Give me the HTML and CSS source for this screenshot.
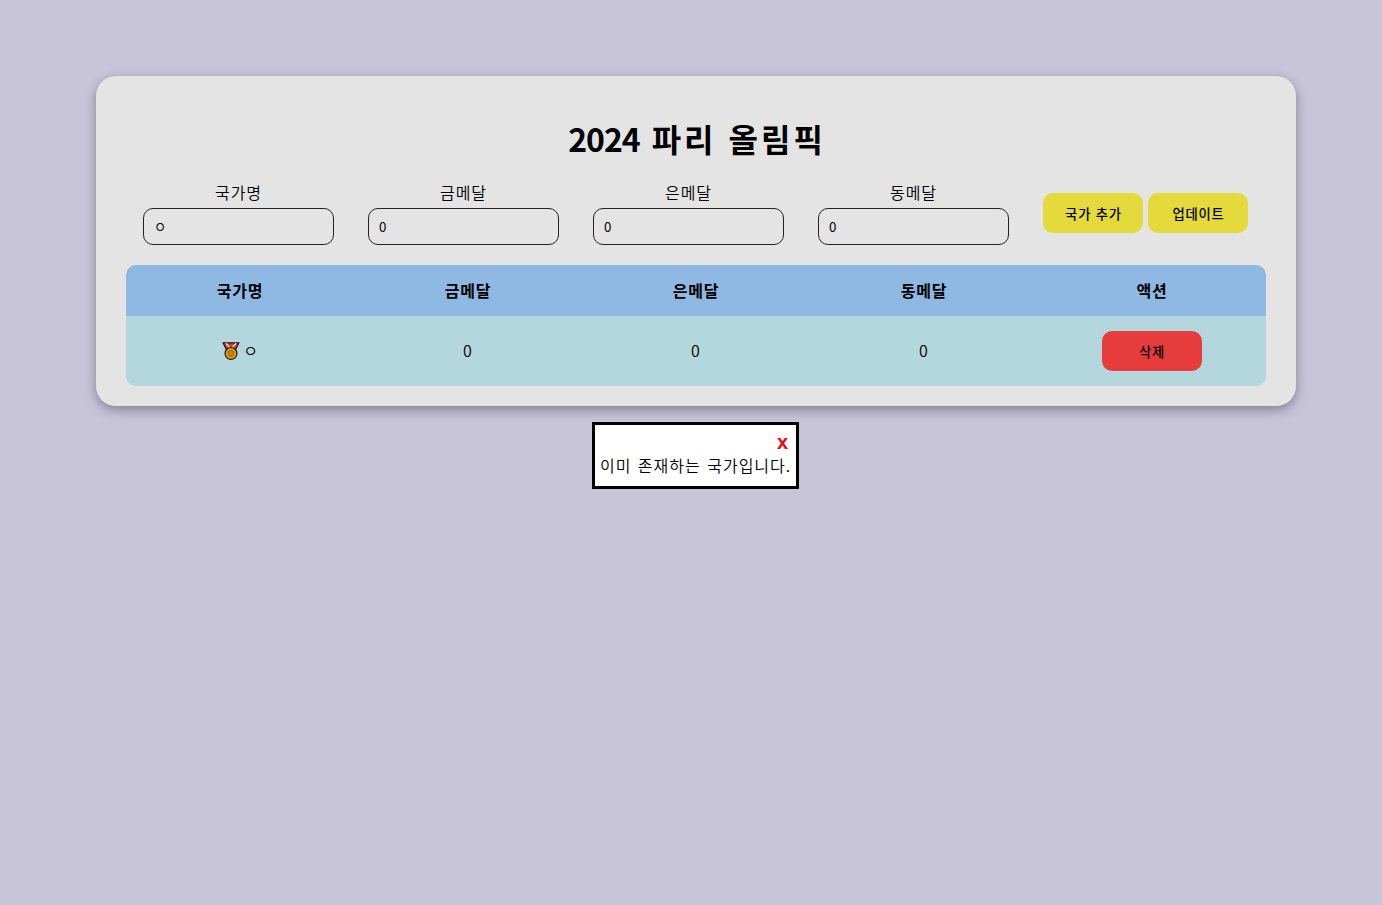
FILE: index.html
```html
<!DOCTYPE html>
<html lang="ko">
<head>
<meta charset="utf-8">
<title>2024 파리 올림픽</title>
<link rel="stylesheet" href="styles.css">
</head>
<body>
<main class="page">
  <section class="card">
    <h1 class="title"><span class="title-year">2024</span> 파리 올림픽</h1>
    <form class="form">
      <label class="field"><span class="field-label">국가명</span><input class="field-input" type="text" value="ㅇ"></label>
      <label class="field"><span class="field-label">금메달</span><input class="field-input" type="text" value="0"></label>
      <label class="field"><span class="field-label">은메달</span><input class="field-input" type="text" value="0"></label>
      <label class="field"><span class="field-label">동메달</span><input class="field-input" type="text" value="0"></label>
      <div class="actions">
        <button class="btn btn-yellow" type="button">국가 추가</button>
        <button class="btn btn-yellow" type="button">업데이트</button>
      </div>
    </form>
    <table class="table">
      <thead>
        <tr><th>국가명</th><th>금메달</th><th>은메달</th><th>동메달</th><th>액션</th></tr>
      </thead>
      <tbody>
        <tr>
          <td>
            <div class="country-cell">
              <svg class="medal" viewBox="0 0 18 18" aria-hidden="true">
                <path d="M1 .8h16l-4.500 9h-7z" fill="#e0362c" stroke="#1a1a1a" stroke-width="1.200" stroke-linejoin="round"/>
                <path d="M4 1.200 9 7.500l5-6.300" fill="none" stroke="#f6f0ee" stroke-width="1.300"/>
                <circle cx="9" cy="11.400" r="5.900" fill="#e5a00d" stroke="#1a1a1a" stroke-width="1.200"/>
                <circle cx="9" cy="11.400" r="3" fill="#c98500" stroke="#8a5a00" stroke-width=".8"/>
              </svg>
              <span>ㅇ</span>
            </div>
          </td>
          <td class="num">0</td>
          <td class="num">0</td>
          <td class="num">0</td>
          <td class="action"><button class="btn btn-red" type="button">삭제</button></td>
        </tr>
      </tbody>
    </table>
  </section>
  <div class="toast">
    <button class="toast-close" type="button">x</button>
    <p class="toast-text">이미 존재하는 국가입니다.</p>
  </div>
</main>
</body>
</html>
```
FILE: styles.css
```css
* {
  box-sizing: border-box;
}

html,
body {
  margin: 0;
  height: 100%;
}

body {
  background: #c8c5db;
  color: #000;
  font-family: "Noto Sans CJK KR", "Liberation Sans", sans-serif;
  font-size: 16px;
}

.page {
  display: flex;
  flex-direction: column;
  align-items: center;
  padding: 76px 0 0 10px;
}

.card {
  width: 1200px;
  height: 330px;
  padding: 42px 30px 20px;
  background: #e4e4e4;
  border-radius: 20px;
  box-shadow: 0 4px 12px rgba(0, 0, 0, 0.35);
}

.title {
  margin: 0;
  height: 40px;
  padding-left: 2px;
  font-size: 32px;
  line-height: 40px;
  font-weight: 700;
  text-align: center;
  letter-spacing: 3px;
}

.title-year {
  letter-spacing: -1px;
}

.form {
  display: flex;
  justify-content: center;
  align-items: flex-start;
  gap: 34px;
  margin: 25px 0 20px;
  padding-right: 1px;
  height: 62px;
}

.field {
  display: flex;
  flex-direction: column;
  align-items: center;
  width: 191px;
}

.field-label {
  height: 25px;
  font-size: 16px;
  font-weight: 350;
  line-height: 18px;
  letter-spacing: 1px;
}

.field-input {
  width: 191px;
  height: 37px;
  padding: 0 10px;
  border: 1px solid #222;
  border-radius: 10px;
  background: transparent;
  color: #000;
  font-family: "Noto Sans CJK KR", "Liberation Sans", sans-serif;
  font-size: 13.333px;
}

.actions {
  display: flex;
  gap: 5px;
  margin-top: 10px;
}

.btn {
  width: 100px;
  height: 40px;
  padding: 0;
  border: 0;
  border-radius: 10px;
  color: #000;
  font-family: inherit;
  font-size: 13.333px;
  font-weight: 500;
  letter-spacing: 0.8px;
}

.btn-yellow {
  padding-left: 1px;
  background: #e5da3b;
}

.btn-red {
  background: #e73c3c;
  display: block;
  margin: 0 auto;
}

.table {
  width: 1140px;
  table-layout: fixed;
  border-collapse: separate;
  border-spacing: 0;
  border-radius: 10px;
  overflow: hidden;
}

.table th {
  height: 51px;
  padding: 0 0 2px;
  background: #8fb9e3;
  font-size: 16px;
  font-weight: 700;
  letter-spacing: 0.7px;
}

.table td {
  height: 70px;
  padding: 0 0 3px;
  background: #b4d6dd;
  font-size: 16px;
  font-weight: 350;
  text-align: center;
}

.table .num {
  padding-right: 1px;
}

.table .action {
  padding: 0;
}

.country-cell {
  display: flex;
  justify-content: center;
  align-items: center;
  gap: 3px;
}

.medal {
  width: 18px;
  height: 18px;
  margin-top: 2px;
}

.toast {
  display: flex;
  flex-direction: column;
  align-items: flex-end;
  margin: 16px 1px 0 0;
  width: 207px;
  height: 67px;
  padding: 5px;
  background: #fff;
  border: 3px solid #000;
}

.toast-close {
  height: 24px;
  margin-right: 2px;
  padding: 0 1px;
  border: 0;
  background: none;
  color: #f00;
  font-family: "Liberation Sans", sans-serif;
  font-size: 20px;
  line-height: 24px;
  font-weight: 700;
}

.toast-text {
  margin: 0;
  align-self: center;
  white-space: nowrap;
  font-size: 16px;
  font-weight: 350;
  line-height: 22px;
  letter-spacing: 1px;
  word-spacing: 1px;
}
```
